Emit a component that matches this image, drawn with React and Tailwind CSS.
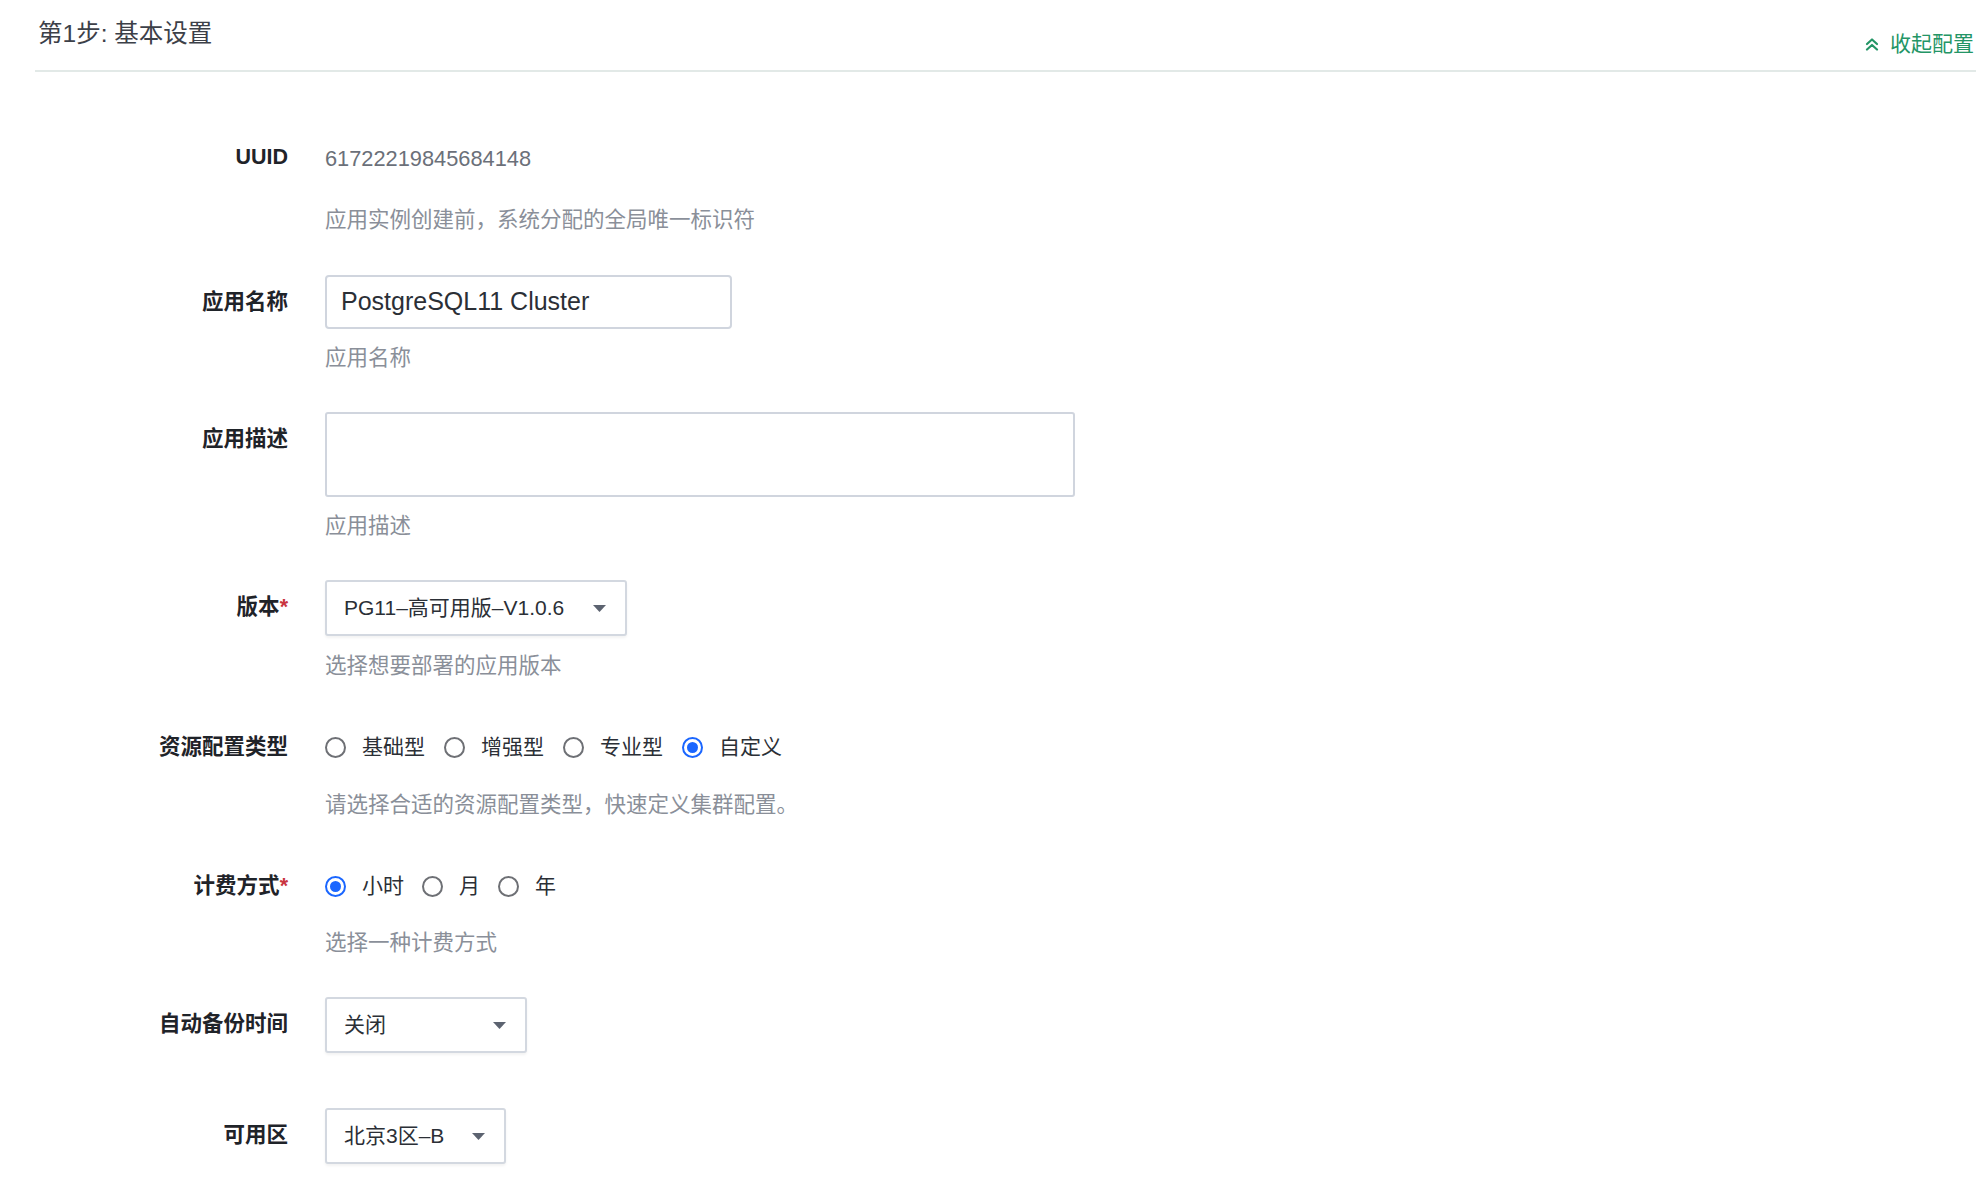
import React from 'react';

const FONT = { fontFamily: '"Liberation Sans", "Noto Sans CJK SC", sans-serif' };

function Label({ children, required }) {
  return (
    <div className="w-[288px] h-[54px] shrink-0 flex items-center justify-end text-[21.5px] font-semibold text-[#1f2329]">
      {children}
      {required && <span className="text-[#c9353f] font-semibold">*</span>}
    </div>
  );
}

function Hint({ children, className = '' }) {
  return <div className={`text-[21.5px] leading-[30px] text-[#8a8f99] ${className}`}>{children}</div>;
}

function Caret() {
  return (
    <svg width="13" height="7" viewBox="0 0 13 7" className="shrink-0">
      <path d="M0 0 L13 0 L6.5 7 Z" fill="#5c6370" />
    </svg>
  );
}

function Select({ value, width }) {
  return (
    <div
      className={`${width} h-[56px] flex items-center justify-between pl-[17px] pr-[19px] border-2 border-[#d3d8e0] rounded-[3px] shadow-[0_2px_3px_rgba(0,0,0,0.05)] bg-white text-[21px] text-[#2b2f36]`}
    >
      <span>{value}</span>
      <Caret />
    </div>
  );
}

function Radio({ label, checked }) {
  return (
    <div className="flex items-center">
      {checked ? (
        <span className="w-[21px] h-[21px] rounded-full border-2 border-[#1a66ff] flex items-center justify-center">
          <span className="w-[11px] h-[11px] rounded-full bg-[#1a66ff]" />
        </span>
      ) : (
        <span className="w-[21px] h-[21px] rounded-full border-2 border-[#6e7075]" />
      )}
      <span className="ml-[16px] text-[21px] text-[#2b2f36]">{label}</span>
    </div>
  );
}

function Item({ label, required, children, last }) {
  return (
    <div className={`flex ${last ? '' : 'mb-[39px]'}`}>
      <Label required={required}>{label}</Label>
      <div className="ml-[37px]">{children}</div>
    </div>
  );
}

export default function App() {
  return (
    <div className="w-full min-h-screen bg-white" style={FONT}>
      <div className="ml-[35px] mr-[8px] h-[72px] border-b-2 border-[#e2e9e7] flex justify-between">
        <div className="pt-[17px] pl-[3px] text-[24.5px] leading-[34px] text-[#3c4048]">第1步: 基本设置</div>
        <div className="pt-[29px] pr-[2px] flex items-start text-[21px] leading-[30px] text-[#249566]">
          <svg width="14" height="14" viewBox="0 0 14 14" className="mt-[8px] mr-[11px]" fill="none" stroke="#249566" strokeWidth="2.2" strokeLinecap="round" strokeLinejoin="round">
            <path d="M2 7 L7 2.5 L12 7" />
            <path d="M2 12.5 L7 8 L12 12.5" />
          </svg>
          收起配置
        </div>
      </div>

      <div className="pt-[58px]">
        <div className="flex mb-[40px]">
          <Label>UUID</Label>
          <div className="ml-[37px]">
            <div className="h-[54px] flex items-center pt-[4px] text-[21.8px] text-[#6b7079]">61722219845684148</div>
            <Hint className="mt-[21px]">应用实例创建前，系统分配的全局唯一标识符</Hint>
          </div>
        </div>

        <Item label="应用名称">
          <div className="w-[407px] h-[54px] flex items-center pl-[14px] border-2 border-[#d0d5de] rounded-[4px] text-[25px] text-[#2b2f36]">
            PostgreSQL11 Cluster
          </div>
          <Hint className="mt-[14px]">应用名称</Hint>
        </Item>

        <Item label="应用描述">
          <div className="w-[750px] h-[85px] border-2 border-[#d0d5de] rounded-[3px]" />
          <Hint className="mt-[14px]">应用描述</Hint>
        </Item>

        <Item label="版本" required>
          <Select value="PG11–高可用版–V1.0.6" width="w-[302px]" />
          <Hint className="mt-[15px]">选择想要部署的应用版本</Hint>
        </Item>

        <Item label="资源配置类型">
          <div className="h-[54px] flex items-center gap-[19px]">
            <Radio label="基础型" />
            <Radio label="增强型" />
            <Radio label="专业型" />
            <Radio label="自定义" checked />
          </div>
          <Hint className="mt-[16px]">请选择合适的资源配置类型，快速定义集群配置。</Hint>
        </Item>

        <Item label="计费方式" required>
          <div className="h-[54px] flex items-center gap-[18px]">
            <Radio label="小时" checked />
            <Radio label="月" />
            <Radio label="年" />
          </div>
          <Hint className="mt-[15px]">选择一种计费方式</Hint>
        </Item>

        <div className="flex mb-[55px]">
          <Label>自动备份时间</Label>
          <div className="ml-[37px]">
            <Select value="关闭" width="w-[202px]" />
          </div>
        </div>

        <Item label="可用区" last>
          <Select value="北京3区–B" width="w-[181px]" />
        </Item>
      </div>
    </div>
  );
}
